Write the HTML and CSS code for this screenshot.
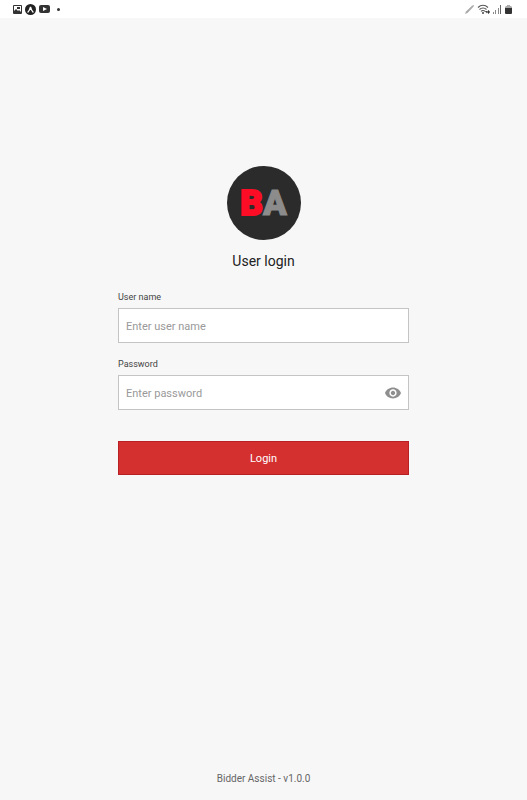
FILE: index.html
```html
<!DOCTYPE html>
<html lang="en">
<head>
    <meta charset="UTF-8">
    <meta name="viewport" content="width=device-width, initial-scale=1.0">
    <title>Bidder Assist - User login</title>
    <link rel="stylesheet" href="styles.css">
</head>
<body>
    <header class="status-bar">
        <div class="status-icons">
            <svg width="9" height="9" viewBox="0 0 9 9">
                <path fill="#333" fill-rule="evenodd" d="M1 0h7a1 1 0 0 1 1 1v7a1 1 0 0 1-1 1H1a1 1 0 0 1-1-1V1a1 1 0 0 1 1-1zM1 1v5l2-2 2 2 1-1 2 2V1z"/>
                <path fill="#333" d="M4 2h3v2H4z"/>
            </svg>
            <svg width="11" height="11" viewBox="0 0 11 11">
                <circle cx="5.500" cy="5.500" r="5.500" fill="#222"/>
                <path d="M3 8c1-1 2-3 2.500-5C6 5 7 7 8 8" fill="none" stroke="#fff" stroke-width="1.300" stroke-linecap="round"/>
            </svg>
            <svg width="11" height="8" viewBox="0 0 11 8">
                <rect width="11" height="8" rx="2" fill="#333"/>
                <path d="M4 2l4 2-4 2z" fill="#fff"/>
            </svg>
            <span class="dot"></span>
        </div>
        <div class="status-icons">
            <svg width="9" height="9" viewBox="0 0 9 9">
                <path d="M0 9l1-2.500L7 .8 8.500 0 9 .5 8.200 2 2.500 8z" fill="#aaa"/>
            </svg>
            <svg width="13" height="10" viewBox="0 0 13 10">
                <path d="M1 3.500c3-3 7-3 10 0M2.500 5.500c2-2 5-2 7 0M4 7.300c1-1 3-1 4 0" fill="none" stroke="#555" stroke-width="1.100"/>
                <circle cx="6" cy="9" r="1" fill="#444"/>
                <path d="M8 7l1.500 2.500L10 7zM10 8l1.500-2L13 8l-1.500 2z" fill="#333"/>
            </svg>
            <svg width="9" height="9" viewBox="0 0 9 9">
                <path d="M0 7h1v2H0zM2 5h1v4H2zM5 3h1v6H5z" fill="#888"/>
                <path d="M7 0h1v9H7z" fill="#666"/>
            </svg>
            <svg width="7" height="9" viewBox="0 0 7 9">
                <path d="M2 0h3v1h1l1 1v1H0V2l1-1h1z" fill="#aaa"/>
                <path d="M0 3h7v5a1 1 0 0 1-1 1H1a1 1 0 0 1-1-1z" fill="#333"/>
            </svg>
        </div>
    </header>

    <main class="container">
        <div class="logo"><span class="logo-b">B</span><span class="logo-a">A</span></div>
        <h1>User login</h1>
        <form class="login-form">
            <label for="userName">User name</label>
            <input type="text" id="userName" placeholder="Enter user name">
            <label for="password">Password</label>
            <div class="password-box">
                <input type="password" id="password" placeholder="Enter password">
                <button type="button" class="show-button" aria-label="Show password">
                    <svg width="16" height="12" viewBox="1 4 22 16">
                        <path d="M12 4.500C7 4.500 2.730 7.610 1 12c1.730 4.390 6 7.500 11 7.500s9.270-3.110 11-7.500c-1.730-4.390-6-7.500-11-7.500zM12 17c-2.760 0-5-2.240-5-5s2.240-5 5-5 5 2.240 5 5-2.240 5-5 5zm0-8c-1.660 0-3 1.340-3 3s1.340 3 3 3 3-1.340 3-3-1.340-3-3-3z" fill="#8f8f8f"/>
                    </svg>
                </button>
            </div>
            <button type="submit" class="login-button">Login</button>
        </form>
    </main>

    <footer>Bidder Assist - v1.0.0</footer>
</body>
</html>
```

FILE: styles.css
```css
* {
    box-sizing: border-box;
}
body {
    display: flex;
    flex-direction: column;
    min-height: 100vh;
    margin: 0;
    font-family: Roboto, sans-serif;
    background-color: #f7f7f7;
    color: #222;
}
svg {
    display: block;
}
.status-bar {
    display: flex;
    justify-content: space-between;
    align-items: center;
    height: 18px;
    padding: 0 15px 0 13px;
    background: #fff;
}
.status-icons {
    display: flex;
    align-items: center;
    gap: 3px;
}
.dot {
    width: 3px;
    height: 3px;
    margin-left: 4px;
    border-radius: 50%;
    background: #333;
}
.container {
    display: flex;
    flex-direction: column;
    align-items: center;
    flex: 1;
    padding: 148px 20px 20px;
}
.logo {
    display: flex;
    justify-content: center;
    align-items: center;
    width: 74px;
    height: 74px;
    border-radius: 50%;
    background: #2b2b2b;
    font-size: 35px;
    font-weight: 900;
}
.logo-b {
    color: #fc0d25;
    -webkit-text-stroke: 2px #fc0d25;
}
.logo-a {
    color: #8c8c8c;
    -webkit-text-stroke: 1px #8c8c8c;
}
h1 {
    margin: 11px 0 20px;
    font-size: 14px;
    font-weight: 400;
    line-height: 20px;
}
.login-form {
    display: flex;
    flex-direction: column;
    width: 100%;
    max-width: 291px;
}
label {
    margin-bottom: 5px;
    font-size: 9px;
    line-height: 12px;
    color: #444;
}
input {
    width: 100%;
    height: 35px;
    padding: 2px 7px 0;
    border: 1px solid #c4c4c4;
    border-radius: 0;
    background: #fff;
    font-family: inherit;
    font-size: 11px;
    color: #222;
}
input::placeholder {
    color: #999;
}
#userName {
    margin-bottom: 15px;
}
.password-box {
    position: relative;
    margin-bottom: 31px;
}
#password {
    display: block;
    padding-right: 32px;
}
.show-button {
    position: absolute;
    top: 0;
    right: 0;
    height: 35px;
    padding: 0 8px;
    border: none;
    background: none;
    cursor: pointer;
}
.login-button {
    height: 34px;
    border: 1px solid #b92026;
    background-color: #d3302f;
    color: #fff;
    font-family: inherit;
    font-size: 11px;
    cursor: pointer;
}
footer {
    padding-bottom: 14px;
    font-size: 10px;
    line-height: 14px;
    text-align: center;
    color: #666;
}
```
